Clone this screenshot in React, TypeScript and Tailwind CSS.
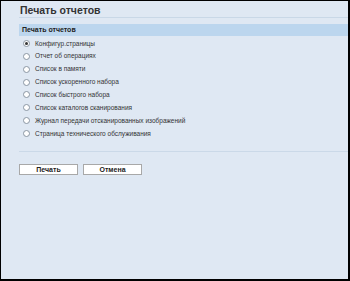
import React, { useState } from "react";

const reports = [
	"Конфигур.страницы",
	"Отчет об операциях",
	"Список в памяти",
	"Список ускоренного набора",
	"Список быстрого набора",
	"Список каталогов сканирования",
	"Журнал передачи отсканированных изображений",
	"Страница технического обслуживания",
];

const Radio = ({ checked }: { checked: boolean }) => (
	<span className="w-[7px] h-[7px] rounded-full border border-[#8a96a3] bg-white flex items-center justify-center shrink-0">
		{checked && <span className="w-[3px] h-[3px] rounded-full bg-[#333]" />}
	</span>
);

const App = () => {
	const [selected, setSelected] = useState<number>(0);

	return (
		<div
			className="w-[350px] h-[281px] bg-[#dfe8f3] border-t border-l border-r-2 border-b-2 border-black overflow-hidden"
			style={{ fontFamily: '"Liberation Sans", Arial, sans-serif' }}
		>
			<div className="pl-[18px]">
				<div className="h-[17px] border-b border-[#c9d8e7] flex items-end">
					<h1 className="text-[10.5px] leading-[12px] font-bold text-[#333] pl-[1px] mb-[1px]">
						Печать отчетов
					</h1>
				</div>

				<div className="mt-[6px] h-[12px] bg-[#bcd6ee] pl-[3px] flex items-center">
					<span className="text-[7px] font-bold text-[#222]">Печать отчетов</span>
				</div>

				{/* Report list */}
				<div className="pt-[1px] pl-[4px] flex flex-col">
					{reports.map((report, index) => (
						<label
							key={report}
							onClick={() => setSelected(index)}
							className="h-[12.86px] flex items-center gap-[5px] cursor-pointer"
						>
							<Radio checked={selected === index} />
							<span className="text-[6.5px] text-[#333]">{report}</span>
						</label>
					))}
				</div>

				<div className="mt-[11px] border-b border-[#cbd9e8]" />

				<div className="mt-[12px] flex gap-[5px]">
					<button className="w-[59px] h-[11px] bg-white border border-[#a8a8a8] text-[7px] font-bold text-[#222] leading-none">
						Печать
					</button>
					<button className="w-[59px] h-[11px] bg-white border border-[#a8a8a8] text-[7px] font-bold text-[#222] leading-none">
						Отмена
					</button>
				</div>
			</div>
		</div>
	);
};

export default App;
